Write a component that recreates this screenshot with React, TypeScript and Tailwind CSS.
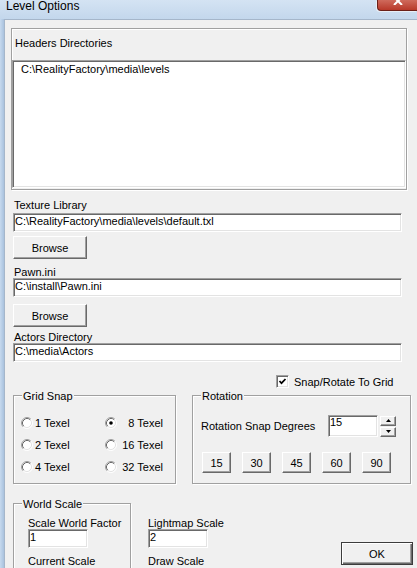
import React from 'react';

// Classic Win32 3D edges
const sunken =
  'border border-t-[#a0a0a0] border-l-[#a0a0a0] border-r-white border-b-white bg-white shadow-[inset_1px_1px_0_#696969,inset_-1px_-1px_0_#e3e3e3]';
const raised =
  'border border-t-white border-l-white border-r-[#696969] border-b-[#696969] bg-[#f0f0f0] shadow-[inset_-1px_-1px_0_#a0a0a0]';
const etched = 'border border-[#a0a0a0] shadow-[inset_1px_1px_0_#ffffff,1px_1px_0_#ffffff]';

function Radio({ checked = false }: { checked?: boolean }) {
  return (
    <svg width="12" height="12" viewBox="0 0 12 12" className="shrink-0">
      <circle cx="6" cy="6" r="5" fill="#ffffff" />
      <path d="M2.11 9.89 A5.5 5.5 0 0 1 9.89 2.11" stroke="#a0a0a0" fill="none" />
      <path d="M9.89 2.11 A5.5 5.5 0 0 1 2.11 9.89" stroke="#ffffff" fill="none" />
      <path d="M2.82 9.18 A4.5 4.5 0 0 1 9.18 2.82" stroke="#696969" fill="none" />
      <path d="M9.18 2.82 A4.5 4.5 0 0 1 2.82 9.18" stroke="#e3e3e3" fill="none" />
      {checked && <circle cx="6" cy="6" r="1.8" fill="#000000" />}
    </svg>
  );
}

function Checkbox() {
  return (
    <div className={`${sunken} w-[13px] h-[13px] shrink-0 flex items-center justify-center`}>
      <svg width="9" height="9" viewBox="0 0 9 9">
        <polyline points="1.5,4 3.5,6.2 7.5,2" stroke="#000000" strokeWidth="1.7" fill="none" />
      </svg>
    </div>
  );
}

function Group({ title, className = '', children }: { title: string; className?: string; children?: React.ReactNode }) {
  return (
    <div className={`relative shrink-0 ${etched} ${className}`}>
      <span className="absolute -top-[6px] left-[8px] bg-[#f0f0f0] px-[1px] leading-[12px]">{title}</span>
      {children}
    </div>
  );
}

function Field({ value, className = '' }: { value: string; className?: string }) {
  return <div className={`${sunken} h-[19px] pl-[1px] pt-[1px] leading-[12px] whitespace-nowrap ${className}`}>{value}</div>;
}

function Btn({ label, className = '' }: { label: string; className?: string }) {
  return <div className={`${raised} flex items-center justify-center leading-[12px] ${className}`}>{label}</div>;
}

function SpinBtn({ up = false }: { up?: boolean }) {
  return (
    <div className={`${raised} w-[16px] h-[10px] flex items-center justify-center`}>
      <svg width="5" height="3" viewBox="0 0 5 3">
        <polygon points={up ? '2.5,0 5,3 0,3' : '0,0 5,0 2.5,3'} fill="#000000" />
      </svg>
    </div>
  );
}

export default function App() {
  const angles = ['15', '30', '45', '60', '90'];

  return (
    <div className="w-[417px] h-[568px] overflow-hidden flex flex-col bg-[#c6d9ee] text-[11px] text-black font-['Liberation_Sans',Arial,sans-serif]">
      {/* Title bar */}
      <div className="h-[19px] shrink-0 flex items-start bg-[linear-gradient(to_bottom,#d4e3f3,#c3d7ec)]">
        <span className="pl-[6px] text-[12px] leading-[13px]">Level Options</span>
        <div className="ml-auto w-[40px] h-[11px] rounded-bl-[4px] border-l border-b border-[#6b2018] bg-[linear-gradient(to_bottom,#cf6a5c,#b8392a)] shadow-[-1px_1px_0_#e8eef6] flex justify-center overflow-hidden">
          <svg width="10" height="8" viewBox="0 0 10 8" className="-mt-[3px]">
            <path d="M1 0 L9 8 M9 0 L1 8" stroke="#ffffff" strokeWidth="2" />
          </svg>
        </div>
      </div>

      <div className="flex flex-1 min-h-0">
        <div className="w-[4px] shrink-0 bg-[linear-gradient(to_right,#c6d9ee,#a9c2de)]" />
        <div className="flex-1 min-w-0 bg-[#f0f0f0] border-t border-l border-[#a5b6ca] pl-[8px] pr-[4px]">
          {/* Headers directories */}
          <div className={`${etched} mt-[8px] -ml-[2px] w-[396px] pb-[1px]`}>
            <div className="pt-[8px] pl-[3px] leading-[13px]">Headers Directories</div>
            <div className={`${sunken} mt-[10px] h-[128px] pl-[8px] pt-[2px] leading-[13px]`}>
              C:\RealityFactory\media\levels
            </div>
          </div>

          <div className="mt-[9px] pl-[1px] leading-[12px]">Texture Library</div>
          <Field value="C:\RealityFactory\media\levels\default.txl" className="mt-[2px] w-[389px]" />
          <Btn label="Browse" className="mt-[4px] w-[74px] h-[23px]" />

          <div className="mt-[7px] pl-[1px] leading-[12px]">Pawn.ini</div>
          <Field value="C:\install\Pawn.ini" className="w-[389px]" />
          <Btn label="Browse" className="mt-[7px] w-[74px] h-[23px]" />

          <div className="mt-[4px] pl-[1px] leading-[12px]">Actors Directory</div>
          <Field value="C:\media\Actors" className="w-[389px]" />

          <div className="mt-[13px] ml-[263px] h-[13px] flex items-center gap-[5px]">
            <Checkbox />
            <span className="leading-[12px] whitespace-nowrap">Snap/Rotate To Grid</span>
          </div>

          <div className="mt-[7px] flex items-start">
            <Group title="Grid Snap" className="w-[163px] h-[89px]">
              <div className="grid grid-cols-[84px_58px] auto-rows-[22px] pl-[7px] pt-[16px] leading-[12px]">
                <div className="flex items-center gap-[2px]"><Radio /><span>1 Texel</span></div>
                <div className="flex items-center"><Radio checked /><span className="flex-1 text-right">8 Texel</span></div>
                <div className="flex items-center gap-[2px]"><Radio /><span>2 Texel</span></div>
                <div className="flex items-center"><Radio /><span className="flex-1 text-right">16 Texel</span></div>
                <div className="flex items-center gap-[2px]"><Radio /><span>4 Texel</span></div>
                <div className="flex items-center"><Radio /><span className="flex-1 text-right">32 Texel</span></div>
              </div>
            </Group>

            <Group title="Rotation" className="ml-[16px] w-[219px] h-[89px]">
              <div className="flex items-center pl-[8px] pt-[19px] leading-[12px]">
                <span className="w-[127px] whitespace-nowrap">Rotation Snap Degrees</span>
                <div className={`${sunken} w-[50px] h-[22px] pl-[1px] leading-[12px]`}>15</div>
                <div className="ml-[2px] flex flex-col gap-[1px]">
                  <SpinBtn up />
                  <SpinBtn />
                </div>
              </div>
              <div className="mt-[15px] pl-[9px] flex gap-[11px]">
                {angles.map(a => (
                  <Btn key={a} label={a} className="w-[29px] h-[21px]" />
                ))}
              </div>
            </Group>
          </div>

          <div className="mt-[19px] flex items-start">
            <Group title="World Scale" className="w-[118px] h-[80px]">
              <div className="pt-[13px] pl-[14px] leading-[12px]">
                <div>Scale World Factor</div>
                <Field value="1" className="w-[60px]" />
                <div className="mt-[7px]">Current Scale</div>
              </div>
            </Group>
            <div className="ml-[17px] pt-[14px] leading-[12px]">
              <div>Lightmap Scale</div>
              <Field value="2" className="w-[60px]" />
              <div className="mt-[7px]">Draw Scale</div>
            </div>
            <div className="ml-auto mt-[39px] w-[72px] h-[23px] shrink-0 border border-[#3c3c3c] bg-[#f0f0f0] shadow-[inset_1px_1px_0_#ffffff,inset_-1px_-1px_0_#696969,inset_-2px_-2px_0_#a0a0a0] flex items-center justify-center leading-[12px]">
              OK
            </div>
          </div>
        </div>
      </div>
    </div>
  );
}
